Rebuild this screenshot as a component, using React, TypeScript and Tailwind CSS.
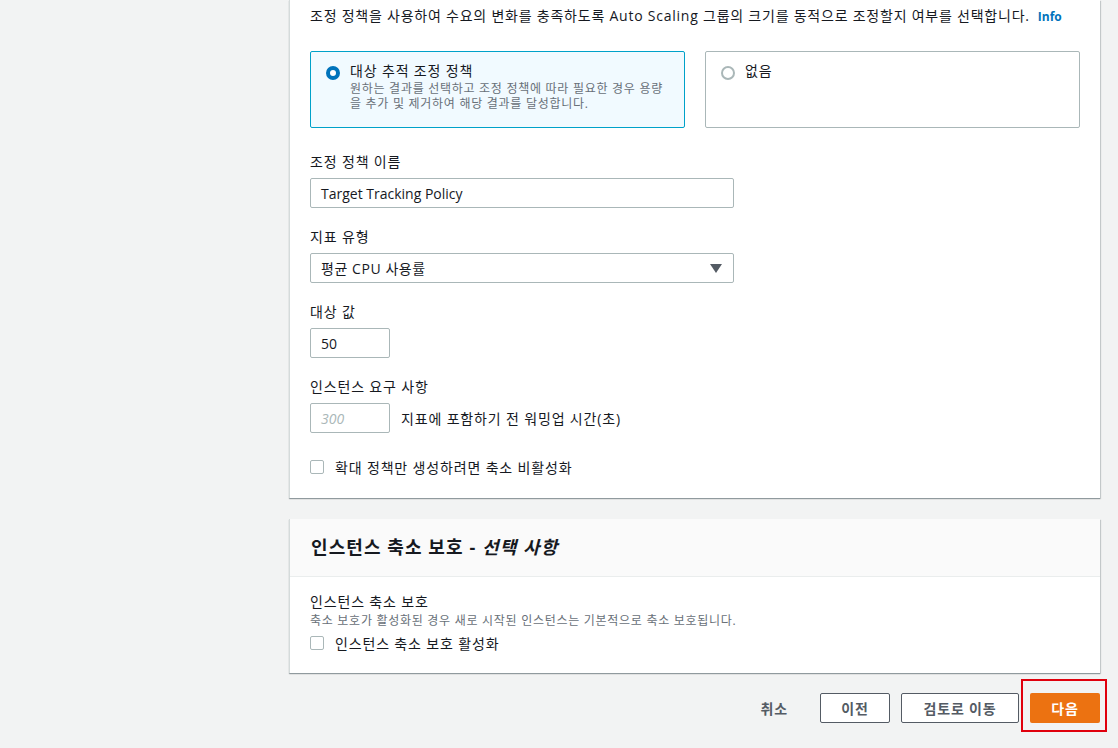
import React from "react";

const font = { fontFamily: '"Open Sans", "Noto Sans CJK KR", sans-serif' };

const Label = ({ children, className = "" }: { children: React.ReactNode; className?: string }) => (
  <div className={`text-[14px] leading-[22px] tracking-[0.06em] text-[#16191f] ${className}`}>{children}</div>
);

const Checkbox = ({ label }: { label: string }) => (
  <label className="flex items-center h-[22px]">
    <span className="w-[14px] h-[14px] border border-[#aab7b8] rounded-[2px] bg-white" />
    <span className="ml-[11px] text-[14px] tracking-[0.06em] text-[#16191f]">{label}</span>
  </label>
);

export default function App() {
  return (
    <div className="w-[1118px] h-[748px] bg-[#f2f3f3] overflow-hidden" style={font}>
      <div className="ml-[289px] w-[811px]">
        {/* 조정 정책 카드 */}
        <div className="bg-white border-l border-[#d5dbdb] shadow-[0_1px_1px_rgba(0,28,36,0.3),1px_1px_1px_rgba(0,28,36,0.15)] pl-[20px] pr-[20px] pt-[5px] pb-[20px]">
          <div className="h-[22px] text-[14px] leading-[22px] tracking-[0.055em] text-[#16191f]">
            조정 정책을 사용하여 수요의 변화를 충족하도록 Auto Scaling 그룹의 크기를 동적으로 조정할지 여부를 선택합니다.
            <span className="ml-[8px] text-[12px] font-bold tracking-normal text-[#0073bb]">Info</span>
          </div>

          <div className="mt-[24px] grid grid-cols-2 gap-[20px]">
            <div className="h-[77px] border border-[#00a1c9] bg-[#f1faff] rounded-[2px] pl-[15px] pt-[9px] flex">
              <span className="mt-[5px] w-[14px] h-[14px] rounded-full border-[4px] border-[#0073bb] bg-white shrink-0" />
              <div className="ml-[10px]">
                <div className="text-[14px] leading-[20px] tracking-[0.06em] text-[#16191f]">대상 추적 조정 정책</div>
                <div className="text-[12px] leading-[15px] tracking-[0.06em] text-[#687078] w-[316px]">
                  원하는 결과를 선택하고 조정 정책에 따라 필요한 경우 용량을 추가 및 제거하여 해당 결과를 달성합니다.
                </div>
              </div>
            </div>
            <div className="h-[77px] border border-[#aab7b8] bg-white rounded-[2px] pl-[15px] pt-[9px] flex">
              <span className="mt-[5px] w-[14px] h-[14px] rounded-full border-[2px] border-[#aab7b8] bg-white shrink-0" />
              <div className="ml-[10px] text-[14px] leading-[20px] tracking-[0.06em] text-[#16191f]">없음</div>
            </div>
          </div>

          <Label className="mt-[23px]">조정 정책 이름</Label>
          <div className="mt-[5px] w-[424px] h-[30px] border border-[#aab7b8] rounded-[2px] flex items-center px-[10px] text-[14px] text-[#16191f]">
            Target Tracking Policy
          </div>

          <Label className="mt-[18px]">지표 유형</Label>
          <div className="mt-[5px] w-[424px] h-[30px] border border-[#aab7b8] rounded-[2px] flex items-center justify-between pl-[10px] pr-[11px] text-[14px] tracking-[0.04em] text-[#16191f]">
            <span>평균 CPU 사용률</span>
            <svg width="12" height="9" viewBox="0 0 12 9">
              <path d="M0 0h12L6 9z" fill="#545b64" />
            </svg>
          </div>

          <Label className="mt-[18px]">대상 값</Label>
          <div className="mt-[5px] w-[80px] h-[30px] border border-[#aab7b8] rounded-[2px] flex items-center px-[10px] text-[14px] text-[#16191f]">
            50
          </div>

          <Label className="mt-[18px]">인스턴스 요구 사항</Label>
          <div className="mt-[5px] flex items-center">
            <div className="w-[80px] h-[30px] border border-[#aab7b8] rounded-[2px] flex items-center px-[10px] text-[14px] italic text-[#aab7b8]">
              300
            </div>
            <span className="ml-[11px] text-[14px] tracking-[0.06em] text-[#16191f]">지표에 포함하기 전 워밍업 시간(초)</span>
          </div>

          <div className="mt-[23px]">
            <Checkbox label="확대 정책만 생성하려면 축소 비활성화" />
          </div>
        </div>

        {/* 인스턴스 축소 보호 카드 */}
        <div className="mt-[21px] bg-white border-l border-[#d5dbdb] shadow-[0_1px_1px_rgba(0,28,36,0.3),1px_1px_1px_rgba(0,28,36,0.15)]">
          <div className="h-[58px] bg-[#fafafa] border-b border-[#eaeded] flex items-center px-[21px]">
            <h2 className="text-[18px] font-bold tracking-[0.06em] text-[#16191f]">
              인스턴스 축소 보호 - <i>선택 사항</i>
            </h2>
          </div>
          <div className="pl-[20px] pt-[14px] pb-[19px]">
            <Label>인스턴스 축소 보호</Label>
            <div className="text-[12px] leading-[16px] tracking-[0.06em] text-[#687078]">
              축소 보호가 활성화된 경우 새로 시작된 인스턴스는 기본적으로 축소 보호됩니다.
            </div>
            <div className="mt-[3px]">
              <Checkbox label="인스턴스 축소 보호 활성화" />
            </div>
          </div>
        </div>

        {/* 하단 버튼 */}
        <div className="mt-[20px] flex justify-end items-center gap-[11px]">
          <button className="h-[30px] px-[10px] mr-[11px] text-[14px] font-bold tracking-[0.06em] text-[#545b64]">취소</button>
          <button className="h-[30px] w-[70px] border border-[#545b64] rounded-[2px] bg-white text-[14px] font-bold tracking-[0.06em] text-[#545b64]">
            이전
          </button>
          <button className="h-[30px] w-[118px] border border-[#545b64] rounded-[2px] bg-white text-[14px] font-bold tracking-[0.06em] text-[#545b64]">
            검토로 이동
          </button>
          <div className="relative">
            <button className="h-[30px] w-[70px] rounded-[2px] bg-[#ec7211] text-[14px] font-bold tracking-[0.06em] text-white">
              다음
            </button>
            <div className="absolute left-[-9px] top-[-14px] w-[86px] h-[53px] border-2 border-[#e0000d] pointer-events-none" />
          </div>
        </div>
      </div>
    </div>
  );
}
